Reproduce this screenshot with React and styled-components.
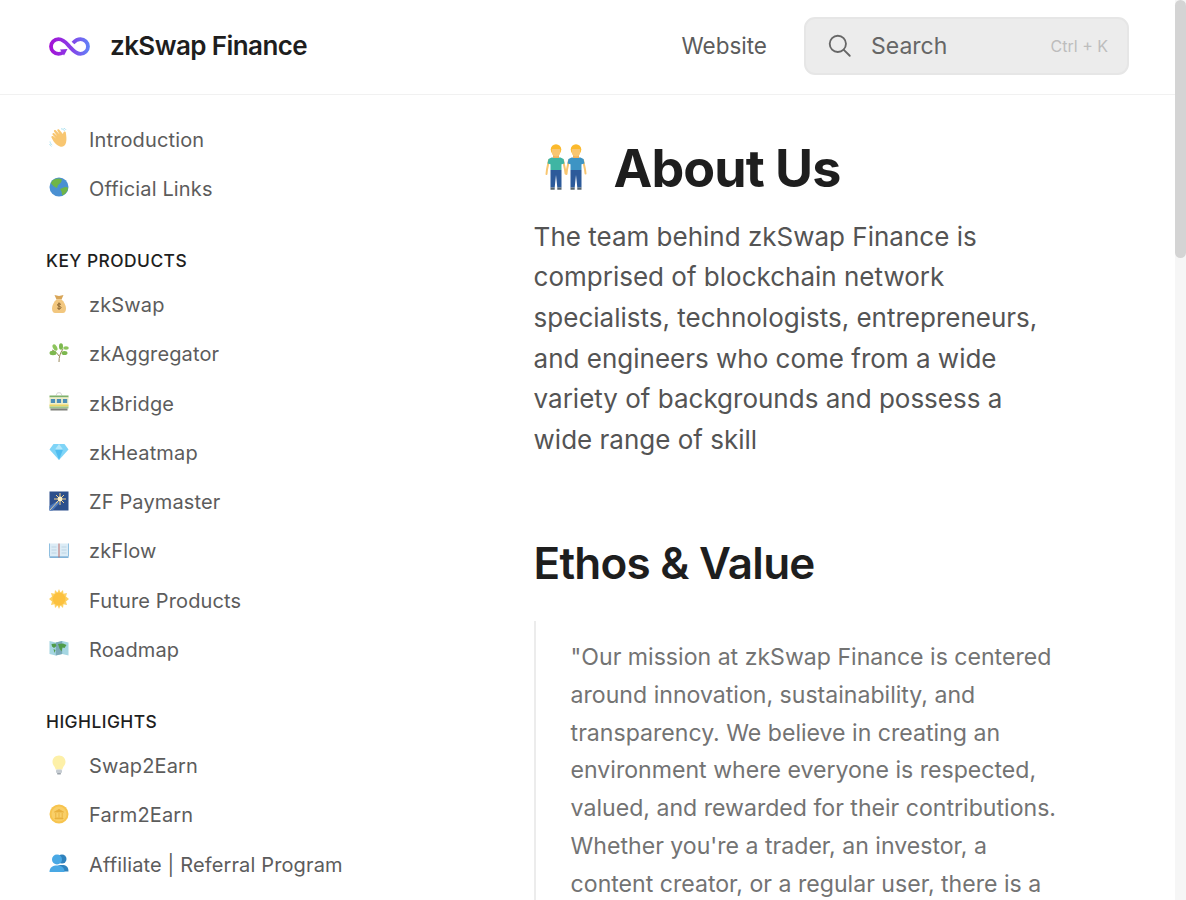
import React from "react";
import styled, { createGlobalStyle } from "styled-components";

const GlobalStyle = createGlobalStyle`
	html, body {
		margin: 0;
		height: 100%;
		overflow: hidden;
		background: #ffffff;
		font-family: Inter, "Noto Sans", sans-serif;
	}
	* {
		box-sizing: border-box;
	}
`;

const Page = styled.div`
	display: flex;
	height: 900px;
	overflow: hidden;
`;

const Viewport = styled.div`
	flex: 1;
	min-width: 0;
	display: flex;
	flex-direction: column;
`;

const ScrollTrack = styled.div`
	width: 11px;
	flex: none;
	background: #f6f6f6;
`;

const ScrollThumb = styled.div`
	height: 258px;
	background: #d4d4d4;
	border-radius: 6px;
`;

const Header = styled.header`
	height: 95px;
	flex: none;
	display: flex;
	align-items: center;
	padding: 0 46px 2px 49px;
	border-bottom: 1px solid #f1f1f1;
`;

const Brand = styled.div`
	display: flex;
	align-items: center;
	gap: 20px;
	font-size: 26px;
	line-height: 30px;
	font-weight: 600;
	letter-spacing: -0.58px;
	color: #1e1e1e;
`;

const NavLink = styled.a`
	margin: -2px 0 0 auto;
	font-size: 22.5px;
	color: #5c5c5c;
`;

const SearchBox = styled.div`
	width: 325px;
	height: 58px;
	margin-left: 37px;
	display: flex;
	align-items: center;
	padding: 0 19px 0 21px;
	background: #ececec;
	border: 2px solid #e6e6e6;
	border-radius: 11px;
	color: #666666;
`;

const SearchLabel = styled.span`
	margin-left: 18px;
	font-size: 23px;
`;

const Shortcut = styled.span`
	margin-left: auto;
	font-size: 16px;
	color: #bdbdbd;
`;

const Body = styled.div`
	flex: 1;
	min-height: 0;
	display: flex;
	overflow: hidden;
`;

const Sidebar = styled.nav`
	width: 533.6px;
	flex: none;
	padding: 20px 0 0 46px;
`;

const SideGroup = styled.div`
	margin-bottom: 22.3px;
`;

const SideTitle = styled.div`
	height: 44.7px;
	padding-top: 8px;
	font-size: 17.4px;
	font-weight: 500;
	letter-spacing: 0.45px;
	line-height: 33px;
	color: #1e1e1e;
`;

const SideItem = styled.a`
	height: 49.25px;
	display: flex;
	align-items: center;
	gap: 20px;
	padding-left: 3px;
	font-size: 20px;
	letter-spacing: 0.14px;
	color: #5c5c5c;
`;

const EmojiBox = styled.svg`
	width: ${({ size }) => size || 20}px;
	height: ${({ size }) => size || 20}px;
	flex: none;
	margin-top: -3px;
`;

const Main = styled.main`
	flex: 1;
	min-width: 0;
	padding: 40px 0 0;
`;

const Article = styled.article`
	width: 531px;
`;

const PageTitle = styled.h1`
	margin: 0 0 15.8px;
	display: flex;
	align-items: center;
	gap: 24px;
	padding-left: 10px;
	height: 66px;
	font-size: 52px;
	font-weight: 700;
	letter-spacing: -0.95px;
	color: #1e1e1e;
`;

const Lead = styled.p`
	margin: 0 0 74px;
	font-size: 26px;
	line-height: 40.6px;
	color: #545454;
`;

const SectionTitle = styled.h2`
	margin: 0 0 29px;
	height: 58px;
	line-height: 58px;
	font-size: 44px;
	font-weight: 600;
	letter-spacing: -0.75px;
	color: #1e1e1e;
`;

const Quote = styled.blockquote`
	margin: 0;
	padding: 17.600px 0 0 35px;
	border-left: 2px solid #ececec;
	font-size: 23.1px;
	line-height: 37.8px;
	color: #737373;
`;

const SearchIcon = () => (
	<svg width="26" height="26" viewBox="0 0 24 24" fill="none" stroke="#666666" strokeWidth="1.7" strokeLinecap="round">
		<circle cx="10" cy="10" r="7.5" />
		<path d="M15.500 15.500l5.500 5.500" />
	</svg>
);

const Logo = () => (
	<svg width="41" height="19" viewBox="0 0 41 19" fill="none">
		<defs>
			<linearGradient id="logoGrad" x1="0" y1="0" x2="41" y2="0" gradientUnits="userSpaceOnUse">
				<stop offset="0" stopColor="#a50fd4" />
				<stop offset="0.5" stopColor="#8a3ae6" />
				<stop offset="1" stopColor="#5f86f8" />
			</linearGradient>
		</defs>
		<path
			d="M14 15.600C12.800 16.300 11.300 16.800 9.500 16.800 5.300 16.800 2 13.600 2 9.500S5.300 2.200 9.500 2.200c5 0 7.800 3.800 11 7.300 3.200 3.500 6 7.300 11 7.300 4.200 0 7.500-3.200 7.500-7.300s-3.300-7.300-7.500-7.300c-3.200 0-5.500 1.700-7.500 3.800"
			stroke="url(#logoGrad)"
			strokeWidth="3.800"
		/>
		<path d="M11 12.500l7.500-.5-3.500 6.500z" fill="#8f2fe2" />
	</svg>
);

const Emoji = ({ size, children, view = "0 0 20 20" }) => (
	<EmojiBox size={size} viewBox={view}>
		{children}
	</EmojiBox>
);

const Wave = () => (
	<Emoji>
		<path
			d="M3.500 6.500c-.5-1 .8-2 1.700-1.200l3 2.800-3.200-4.600c-.6-1.100.8-2 1.700-1.200l4 4.200-2.300-3.800c-.6-1.100.8-2 1.700-1.200l3.800 4.500.6-1.700c.4-1.100 2.100-1 2.300.3.500 3.400 1.100 7 .2 10.200-.9 3-3.300 4.700-6 3.800-3-1-5-3.400-6.500-5.300L2.500 9.600c-.7-1 .5-2.200 1.500-1.500l3 2.400z"
			fill="#f8c671"
		/>
		<path d="M12 .8c1.500 0 2.800.8 3.500 2M14.500.2c1.200.2 2 .8 2.600 1.700M1 13.500c.2 1.500 1 2.800 2.200 3.500M.6 16c.4 1 1 1.800 1.900 2.400" stroke="#a5dfee" strokeWidth="0.900" fill="none" />
	</Emoji>
);

const Globe = () => (
	<Emoji>
		<circle cx="10" cy="10" r="9.500" fill="#4a90d2" />
		<path d="M5 2.500c3-1.500 6-1.500 8 0l-1 3-3 2.500-1 3-3-1.500-3-3c0-1.500 1.500-3 3-4zM11 12l5-2 3 .5c0 3-2 6.500-5.500 8-1-1.500-.5-3-1-4z" fill="#6fb548" />
	</Emoji>
);

const MoneyBag = () => (
	<Emoji>
		<path d="M5.500 1l4.500 1 4.500-1-2 4.500h-5z" fill="#d8a558" />
		<path d="M7.500 5.500h5c2.500 2 4.500 6 4.500 9 0 3-1.500 4.500-3 4.500H6c-1.500 0-3-1.500-3-4.500 0-3 2-7 4.500-9z" fill="#f2c77f" />
		<path d="M12 10.500c-1-1-3.500-1-3.500.500s3.500 1 3.500 2.500-2.500 1.500-3.800.500M10 8.500v7.500" stroke="#8a6430" strokeWidth="1" fill="none" />
	</Emoji>
);

const Herb = () => (
	<Emoji>
		<path d="M10 19c0-5 1-9 4-13M10 13C8 10 6 8 3 7" stroke="#9a8a5c" strokeWidth="1" fill="none" />
		<ellipse cx="4" cy="10" rx="3.500" ry="2.200" fill="#7db84f" />
		<ellipse cx="6" cy="4.500" rx="2" ry="3.500" fill="#8cc45c" transform="rotate(-30 6 4.500)" />
		<ellipse cx="12" cy="3.500" rx="2" ry="3.200" fill="#7db84f" />
		<ellipse cx="17" cy="5" rx="2.800" ry="1.800" fill="#8cc45c" />
		<ellipse cx="15.500" cy="10" rx="3" ry="2" fill="#7db84f" />
	</Emoji>
);

const Train = () => (
	<Emoji>
		<path d="M7 3.500L8.500.8h3L13 3.500" stroke="#d4d4d4" strokeWidth="1" fill="none" />
		<rect x="0.500" y="3.500" width="19" height="2" fill="#7fb06a" />
		<rect x="0.500" y="5.500" width="19" height="9" fill="#f1efc8" />
		<rect x="1.800" y="7" width="4.300" height="4" fill="#4d8fb8" />
		<rect x="7.800" y="7" width="4.300" height="4" fill="#4d8fb8" />
		<rect x="13.900" y="7" width="4.300" height="4" fill="#4d8fb8" />
		<rect x="0.500" y="12.500" width="19" height="2" fill="#ecd667" />
		<rect x="0.500" y="14.500" width="19" height="2" fill="#9ec58c" />
		<rect x="1.500" y="16.500" width="17" height="2" fill="#7e8078" />
	</Emoji>
);

const Gem = () => (
	<Emoji>
		<path d="M4.500 3h11l4 5.500L10 19 .5 8.500z" fill="#7fd4f7" />
		<path d="M6 8.500h8L10 19z" fill="#4fbdf0" />
		<path d="M6 8.500L10 3l4 5.500z" fill="#b4e8fb" />
	</Emoji>
);

const Sparkler = () => (
	<Emoji>
		<rect x="0.500" y="0.500" width="19" height="19" fill="#2c4f8c" />
		<path d="M.5 19.500V15l8-5 2 2-7 7.500z" fill="#4b79bd" />
		<path d="M1 19L11 8" stroke="#d6c8a0" strokeWidth="1" />
		<path d="M11 2v12M5 8h12M7 4l8 8M15 4l-8 8" stroke="#f4d28a" strokeWidth="1" />
		<circle cx="11" cy="8" r="2.400" fill="#fff1c4" />
	</Emoji>
);

const Book = () => (
	<Emoji>
		<path d="M.5 3.500h9v13h-9zM10.500 3.500h9v13h-9z" fill="#dcecf6" />
		<path d="M.5 16.500h19v1.200H.5z" fill="#4d92c8" />
		<path d="M.5 3.500v13M19.500 3.500v13" stroke="#8fbfe0" strokeWidth="1" />
		<path d="M10 3.500v14" stroke="#b7797a" strokeWidth="1.200" />
		<path d="M2.500 7h5M2.500 10h5M2.500 13h5M12.500 7h5M12.500 10h5M12.500 13h5" stroke="#bdd4e4" strokeWidth="1" />
	</Emoji>
);

const Sun = () => (
	<Emoji>
		<path
			d="M10 0l1.500 3.500L14 1l.5 3.700L18 4l-1 3.500 3 2.500-3 2.500 1 3.500-3.500-.7L14 19l-2.500-2.500L10 20l-1.500-3.500L6 19l-.5-3.700L2 16l1-3.500L0 10l3-2.500L2 4l3.500.7L6 1l2.500 2.500z"
			fill="#fdd163"
		/>
		<circle cx="10" cy="10" r="6.500" fill="#fcc13e" />
	</Emoji>
);

const WorldMap = () => (
	<Emoji>
		<path d="M.5 3l6.300 1.500L13.200 3l6.300 1.500v13l-6.300-1.500-6.400 1.500L.5 16z" fill="#a5d6e2" />
		<path d="M6.800 4.500L13.200 3v13l-6.400 1.500z" fill="#7aa9b8" />
		<path d="M2.500 6l4-.5 1 2.500-2.500 2-2-1.500zM9 6l5-.5 3.500 1.500-2 3-2-.5-1 4-2-3zM4.500 11l2 1-1 3z" fill="#4f9c4a" />
	</Emoji>
);

const Bulb = () => (
	<Emoji>
		<path d="M10 .5c3.800 0 6.500 2.800 6.500 6.300 0 3.500-3 5-3 7.700h-7c0-2.700-3-4.200-3-7.700C3.500 3.300 6.200.5 10 .5z" fill="#fdf0a8" />
		<rect x="7" y="14.500" width="6" height="3.500" rx="1" fill="#c6ccd2" />
		<rect x="8" y="18" width="4" height="1.500" rx="0.700" fill="#9aa2aa" />
	</Emoji>
);

const Coin = () => (
	<Emoji>
		<circle cx="10" cy="10" r="9.500" fill="#f7c44e" />
		<circle cx="10" cy="10" r="7.500" fill="#f9cf68" />
		<path d="M5.500 8L10 5.500 14.500 8zM6 14h8v.8H6zM6.800 9v4.500M10 9v4.500M13.200 9v4.500" stroke="#e8b03c" strokeWidth="0.900" fill="#e8b03c" />
	</Emoji>
);

const Busts = () => (
	<Emoji>
		<circle cx="13" cy="6" r="4.500" fill="#2f82bd" />
		<path d="M6 18.500c0-5 3-6.500 7-6.500s6.500 1.500 6.500 6.500z" fill="#2f82bd" />
		<circle cx="8" cy="6.500" r="5" fill="#49a8e4" />
		<path d="M.5 19c0-5 3.500-6.500 7.500-6.500s7.500 1.500 7.500 6.500z" fill="#49a8e4" />
	</Emoji>
);

const Person = ({ x, shirt }) => (
	<g transform={`translate(${x} 0)`}>
		<path d="M3 16l-2 9.500L.5 30M17 16l2 9.500.5 4" stroke="#f8c671" strokeWidth="2" strokeLinecap="round" strokeLinejoin="round" fill="none" />
		<path d="M5.500 13.500h9l3 1.500 1 4.500-3 .8V26H4.500v-5.700l-3-.8 1-4.500z" fill={shirt} />
		<path d="M4.500 26h11v17.500h-4.200L10 31l-1.300 12.500H4.500z" fill="#2c5a9a" />
		<path d="M4.500 43.500h4.200v2.300H4.500zM11.300 43.500h4.200v2.300h-4.200z" fill="#56646e" />
		<circle cx="10" cy="5.500" r="5.300" fill="#fbb92c" />
		<rect x="7" y="9" width="6" height="5" fill="#efb15e" />
		<path d="M5.800 5h8.400v3.500c0 2.500-2 4-4.200 4s-4.200-1.500-4.200-4z" fill="#f8c671" />
	</g>
);

const TwoMen = () => (
	<Emoji size={46} view="0 0 46 46">
		<Person x={2} shirt="#3fb5a3" />
		<Person x={22} shirt="#3d94c4" />
	</Emoji>
);

const groups = [
	{
		items: [
			{ icon: Wave, label: "Introduction" },
			{ icon: Globe, label: "Official Links" },
		],
	},
	{
		title: "KEY PRODUCTS",
		items: [
			{ icon: MoneyBag, label: "zkSwap" },
			{ icon: Herb, label: "zkAggregator" },
			{ icon: Train, label: "zkBridge" },
			{ icon: Gem, label: "zkHeatmap" },
			{ icon: Sparkler, label: "ZF Paymaster" },
			{ icon: Book, label: "zkFlow" },
			{ icon: Sun, label: "Future Products" },
			{ icon: WorldMap, label: "Roadmap" },
		],
	},
	{
		title: "HIGHLIGHTS",
		items: [
			{ icon: Bulb, label: "Swap2Earn" },
			{ icon: Coin, label: "Farm2Earn" },
			{ icon: Busts, label: "Affiliate | Referral Program" },
		],
	},
];

const App = () => (
	<>
		<GlobalStyle />
		<Page>
			<Viewport>
				<Header>
					<Brand>
						<Logo />
						zkSwap Finance
					</Brand>
					<NavLink>Website</NavLink>
					<SearchBox>
						<SearchIcon />
						<SearchLabel>Search</SearchLabel>
						<Shortcut>Ctrl + K</Shortcut>
					</SearchBox>
				</Header>
				<Body>
					<Sidebar>
						{groups.map((group, i) => (
							<SideGroup key={i}>
								{group.title && <SideTitle>{group.title}</SideTitle>}
								{group.items.map(({ icon: Icon, label }) => (
									<SideItem key={label}>
										<Icon />
										{label}
									</SideItem>
								))}
							</SideGroup>
						))}
					</Sidebar>
					<Main>
						<Article>
							<PageTitle>
								<TwoMen />
								About Us
							</PageTitle>
							<Lead>
								The team behind zkSwap Finance is comprised of blockchain network specialists, technologists,
								entrepreneurs, and engineers who come from a wide variety of backgrounds and possess a wide range
								of skill
							</Lead>
							<SectionTitle>Ethos &amp; Value</SectionTitle>
							<Quote>
								"Our mission at zkSwap Finance is centered around innovation, sustainability, and transparency. We
								believe in creating an environment where everyone is respected, valued, and rewarded for their
								contributions. Whether you're a trader, an investor, a content creator, or a regular user, there is
								a
							</Quote>
						</Article>
					</Main>
				</Body>
			</Viewport>
			<ScrollTrack>
				<ScrollThumb />
			</ScrollTrack>
		</Page>
	</>
);

export default App;
